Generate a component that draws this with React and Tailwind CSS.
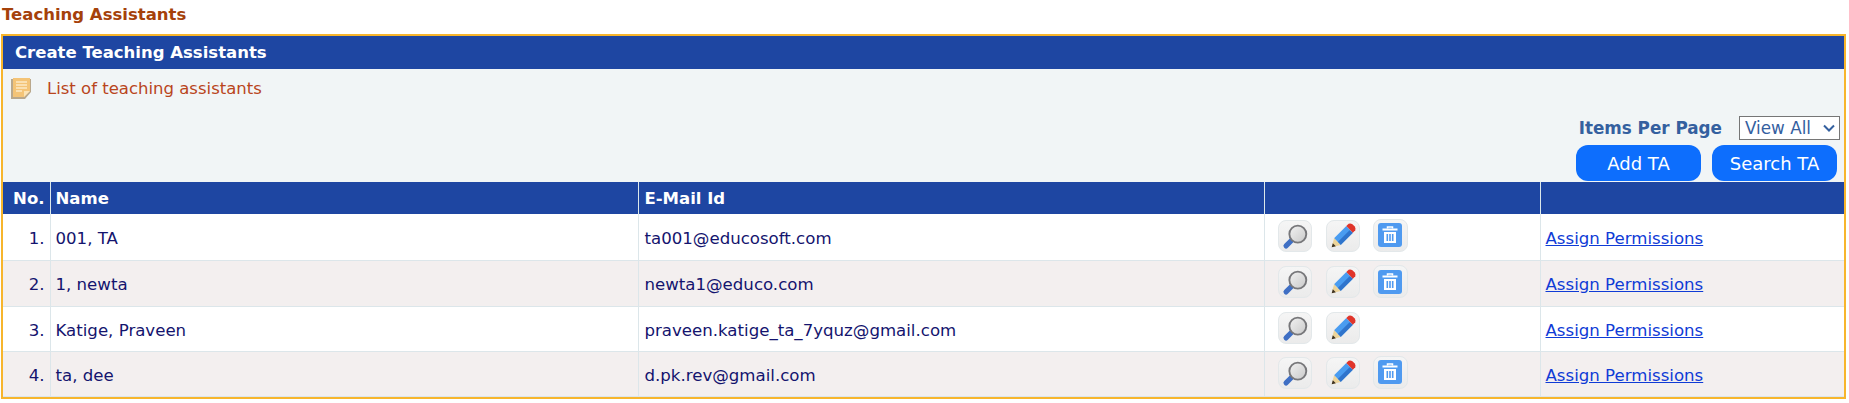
import React from "react";

function Magnifier() {
  return (
    <svg viewBox="0 0 34 32" className="w-[34px] h-[32px]">
      <defs>
        <linearGradient id="lens" x1="0" y1="0" x2="1" y2="1">
          <stop offset="0" stopColor="#f2f2f2" />
          <stop offset="1" stopColor="#c9c9c9" />
        </linearGradient>
      </defs>
      <path d="M7.5 26.5 L14 20" stroke="#3f6fc4" strokeWidth="5.5" strokeLinecap="round" fill="none" />
      <circle cx="20" cy="14" r="9" fill="url(#lens)" stroke="#77777a" strokeWidth="2" />
    </svg>
  );
}

function Pencil() {
  return (
    <svg viewBox="0 0 34 32" className="w-[34px] h-[32px]">
      <path d="M7.5 18.5 L20.5 5.5 L27.5 12.5 L14.5 25.5 Z" fill="#4a9cf0" />
      <path d="M11.5 22.5 L24 10 L27.5 12.5 L14.5 25.5 Z" fill="#2f74cc" />
      <path d="M20.5 5.5 L23 3 Q25 2.2 27 3.5 L29.5 6 Q30.8 8 30 10 L27.5 12.5 Z" fill="#e0352b" />
      <path d="M7.5 18.5 L14.5 25.5 L5 28 Z" fill="#ecd49a" />
      <path d="M5 28 L6.2 23.6 L9.4 26.8 Z" fill="#3a3020" />
    </svg>
  );
}

function Trash() {
  return (
    <svg viewBox="0 0 24 24" className="w-[24px] h-[24px]">
      <rect x="0" y="0" width="24" height="24" rx="3" fill="#4f9af0" />
      <path d="M9.5 5.5 V4 H14.5 V5.5" stroke="#fff" strokeWidth="1.5" fill="none" />
      <rect x="4.5" y="5.5" width="15" height="2" fill="#fff" />
      <path d="M6 9 H18 V20 H6 Z" fill="#fff" />
      <rect x="8.5" y="11" width="1.6" height="7" fill="#4f9af0" />
      <rect x="11.2" y="11" width="1.6" height="7" fill="#4f9af0" />
      <rect x="13.9" y="11" width="1.6" height="7" fill="#4f9af0" />
    </svg>
  );
}

function NoteIcon() {
  return (
    <svg viewBox="0 0 22 22" className="w-[22px] h-[22px]">
      <path d="M1 2 H21 V15 L15 22 H1 Z" fill="#b9a88c" />
      <path d="M3 1 H20 V14 L14 20 H3 Z" fill="#f4c477" />
      <path d="M6 5 H17 M6 8 H17 M6 11 H17 M6 14 H12" stroke="#fbe9c6" strokeWidth="1.4" />
      <path d="M14 20 V14 H20 Z" fill="#fbe3b5" />
    </svg>
  );
}

const rows = [
  { n: "1.", name: "001, TA", mail: "ta001@educosoft.com", del: true, h: "h-[46px]" },
  { n: "2.", name: "1, newta", mail: "newta1@educo.com", del: true, h: "h-[46px]" },
  { n: "3.", name: "Katige, Praveen", mail: "praveen.katige_ta_7yquz@gmail.com", del: false, h: "h-[45px]" },
  { n: "4.", name: "ta, dee", mail: "d.pk.rev@gmail.com", del: true, h: "h-[45px]" },
];

function IconButton({ children, className }) {
  return (
    <span className={"inline-flex items-center justify-center rounded-[8px] bg-gradient-to-b from-[#f5f5f5] to-[#ebebeb] border border-[#e3e8ea] " + className}>
      {children}
    </span>
  );
}

export default function App() {
  return (
    <div className="bg-white w-[1849px] h-[403px] overflow-hidden font-['Verdana','DejaVu_Sans',sans-serif]">
      <div className="h-[34px] pl-[2px] pt-[4px] text-[16.5px] leading-[21px] font-bold text-[#a5410a]">
        Teaching Assistants
      </div>
      <div className="ml-px w-[1845px] border-2 border-[#f7b52c]">
        <div className="h-[33px] bg-[#1e46a2] pl-[12px] text-[16.5px] leading-[34px] font-bold text-white">
          Create Teaching Assistants
        </div>
        <div className="h-[113px] bg-[#f1f5f6] flex flex-col">
          <div className="flex items-start pl-[7px] pt-[8px]">
            <NoteIcon />
            <span className="ml-[15px] mt-[1px] text-[16.5px] leading-[22px] text-[#b9451c]">List of teaching assistants</span>
          </div>
          <div className="mt-auto flex flex-col items-end">
            <div className="flex items-center pr-[4px]">
              <span className="text-[16.8px] leading-[24px] pt-[1px] font-bold text-[#34609f]">Items Per Page</span>
              <span className="ml-[17px] w-[101px] h-[24px] border border-[#767676] bg-white text-[16.8px] leading-[22px] text-[#34609f] pl-[5px] flex items-center justify-between pr-[4px]">
                View All
                <svg viewBox="0 0 12 8" className="w-[12px] h-[8px] shrink-0">
                  <path d="M1 1.5 L6 6.5 L11 1.5" stroke="#34609f" strokeWidth="2" fill="none" />
                </svg>
              </span>
            </div>
            <div className="mt-[5px] flex gap-[11px] pr-[7px] pb-[1px]">
              <button className="w-[125px] h-[36px] rounded-[12px] bg-[#0d6efd] text-white text-[18px]">Add TA</button>
              <button className="w-[125px] h-[36px] rounded-[12px] bg-[#0d6efd] text-white text-[18px]">Search TA</button>
            </div>
          </div>
        </div>
        <table className="w-full table-fixed border-collapse text-[16.6px]">
          <colgroup>
            <col className="w-[47px]" />
            <col className="w-[588px]" />
            <col className="w-[626px]" />
            <col className="w-[276px]" />
            <col />
          </colgroup>
          <thead>
            <tr className="h-[32px] bg-[#1e46a2] text-white text-[16.5px] font-bold">
              <th className="text-right pr-[5px] pt-[3px] border-r border-[#dce8ea]">No.</th>
              <th className="text-left pl-[5px] pt-[3px] border-r border-[#dce8ea]">Name</th>
              <th className="text-left pl-[6px] pt-[3px] border-r border-[#dce8ea]">E-Mail Id</th>
              <th className="border-r border-[#dce8ea]"></th>
              <th></th>
            </tr>
          </thead>
          <tbody>
            {rows.map((r, i) => (
              <tr key={r.n} className={r.h + " text-[#14146e] border-b border-[#dce6ea] " + (i % 2 ? "bg-[#f3efef]" : "bg-white")}>
                <td className="text-right pr-[5px] pt-[5px] border-r border-[#dce6ea]">{r.n}</td>
                <td className="pl-[5px] pt-[5px] border-r border-[#dce6ea]">{r.name}</td>
                <td className="pl-[6px] pt-[5px] border-r border-[#dce6ea]">{r.mail}</td>
                <td className="pl-[13px] border-r border-[#dce6ea]">
                  <div className="flex items-center gap-[14px] -mt-[2px]">
                    <IconButton className="w-[34px] h-[32px]"><Magnifier /></IconButton>
                    <IconButton className="w-[34px] h-[32px]"><Pencil /></IconButton>
                    {r.del && <IconButton className="w-[35px] h-[33px] -ml-[1px] -mt-[1px]"><Trash /></IconButton>}
                  </div>
                </td>
                <td className="pl-[5px] pt-[5px]">
                  <a href="#" className="text-[#0f3bd6] underline">Assign Permissions</a>
                </td>
              </tr>
            ))}
          </tbody>
        </table>
      </div>
    </div>
  );
}
